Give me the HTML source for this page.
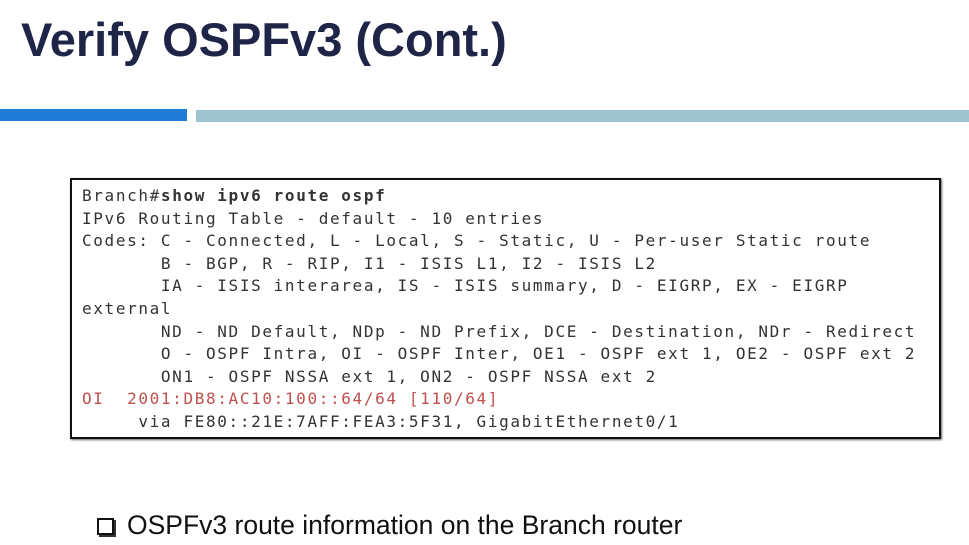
<!DOCTYPE html>
<html><head><style>
body{margin:0;width:969px;height:545px;background:#fff;position:relative;overflow:hidden;font-family:"Liberation Sans",sans-serif}
.t{position:absolute;left:21px;top:12px;font-size:47px;font-weight:bold;color:#1e2547;white-space:nowrap;letter-spacing:0px}
.b1{position:absolute;left:0;top:109px;width:187px;height:12px;background:#1f7bd6}
.b2{position:absolute;left:196px;top:110px;width:773px;height:12px;background:#9dc4cf}
.box{position:absolute;left:70px;top:178px;width:867px;height:257px;border:2px solid #111;box-shadow:1px 1px 2px #666}
pre{position:absolute;left:82px;top:185px;margin:0;font-family:"DejaVu Sans Mono","Liberation Mono","Courier New",monospace;font-size:16px;letter-spacing:1.64px;line-height:22.6px;color:#333}
.r{color:#c0504d}
.cb{position:absolute;left:97px;top:518px;width:13px;height:13px;border:2px solid #111;box-shadow:2px 2px 0 #333}
.bt{position:absolute;left:127px;top:510px;font-size:26.5px;color:#111;white-space:nowrap}
</style></head><body>
<div class="t">Verify OSPFv3 (Cont.)</div>
<div class="b1"></div><div class="b2"></div>
<div class="box"></div>
<pre>Branch#<b>show ipv6 route ospf</b>
IPv6 Routing Table - default - 10 entries
Codes: C - Connected, L - Local, S - Static, U - Per-user Static route
       B - BGP, R - RIP, I1 - ISIS L1, I2 - ISIS L2
       IA - ISIS interarea, IS - ISIS summary, D - EIGRP, EX - EIGRP
external
       ND - ND Default, NDp - ND Prefix, DCE - Destination, NDr - Redirect
       O - OSPF Intra, OI - OSPF Inter, OE1 - OSPF ext 1, OE2 - OSPF ext 2
       ON1 - OSPF NSSA ext 1, ON2 - OSPF NSSA ext 2
<span class="r">OI  2001:DB8:AC10:100::64/64 [110/64]</span>
     via FE80::21E:7AFF:FEA3:5F31, GigabitEthernet0/1</pre>
<div class="cb"></div>
<div class="bt">OSPFv3 route information on the Branch router</div>
</body></html>
